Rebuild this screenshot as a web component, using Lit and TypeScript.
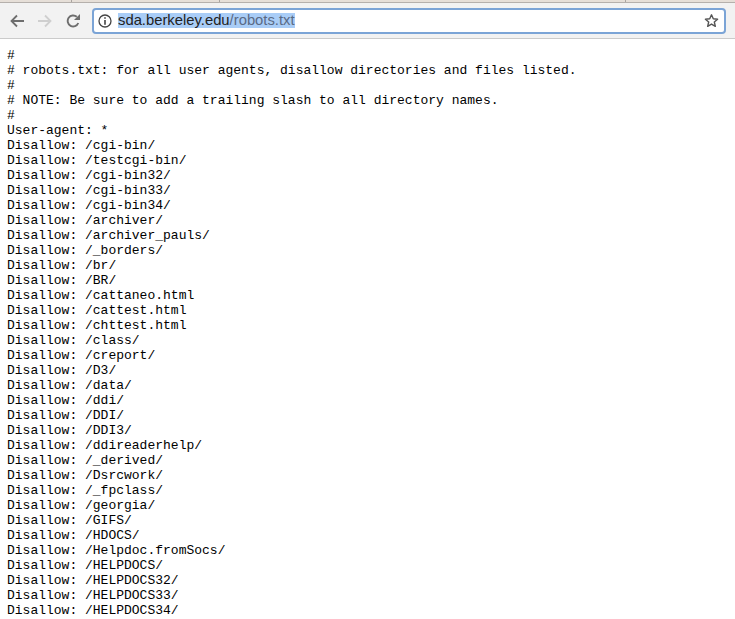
import { LitElement, html, css } from "lit";
import { customElement } from "lit/decorators.js";

const TEXT = `#
# robots.txt: for all user agents, disallow directories and files listed.
#
# NOTE: Be sure to add a trailing slash to all directory names.
#
User-agent: *
Disallow: /cgi-bin/
Disallow: /testcgi-bin/
Disallow: /cgi-bin32/
Disallow: /cgi-bin33/
Disallow: /cgi-bin34/
Disallow: /archiver/
Disallow: /archiver_pauls/
Disallow: /_borders/
Disallow: /br/
Disallow: /BR/
Disallow: /cattaneo.html
Disallow: /cattest.html
Disallow: /chttest.html
Disallow: /class/
Disallow: /creport/
Disallow: /D3/
Disallow: /data/
Disallow: /ddi/
Disallow: /DDI/
Disallow: /DDI3/
Disallow: /ddireaderhelp/
Disallow: /_derived/
Disallow: /Dsrcwork/
Disallow: /_fpclass/
Disallow: /georgia/
Disallow: /GIFS/
Disallow: /HDOCS/
Disallow: /Helpdoc.fromSocs/
Disallow: /HELPDOCS/
Disallow: /HELPDOCS32/
Disallow: /HELPDOCS33/
Disallow: /HELPDOCS34/`;

@customElement("app-root")
export class AppRoot extends LitElement {
  static styles = css`
    :host { display: block; height: 619px; overflow: hidden; background: #fff; }
    .tabs {
      height: 3px; box-sizing: border-box; background: #e6dfd8;
      border-bottom: 1px solid #b5b0ac; display: flex;
    }
    .tabs span { display: block; box-sizing: border-box; border-right: 1px solid #a9a4a0; height: 2px; flex: none; }
    .t1 { width: 72px; }
    .t2 { width: 148px; }
    .t3 { width: 406px; }
    .bar {
      height: 36px; box-sizing: border-box; background: #f2f2f2;
      border-bottom: 1px solid #cbcbcb;
      display: flex; align-items: center; padding: 0 9px 0 10px;
    }
    .nav { display: flex; align-items: center; width: 82px; gap: 14px; flex: none; }
    .nav svg { display: block; flex: none; }
    .omni {
      flex: 1; height: 26px; box-sizing: border-box;
      border: 2px solid #7ba4d6; border-radius: 4px; background: #fff;
      display: flex; align-items: center; padding: 0 5px 0 4px;
      font: 14.8px/15px "Liberation Sans", Arial, sans-serif; color: #222;
    }
    .info { flex: none; margin-right: 6px; display: block; }
    .sel { background: #a9cdf7; white-space: nowrap; }
    .path { color: #5a6a85; }
    .star { margin-left: auto; flex: none; display: block; }
    pre {
      margin: 0; padding: 9px 0 0 7px;
      font: 13px/15px "Liberation Mono", "Courier New", monospace; color: #000;
    }
  `;

  render() {
    return html`
      <div class="tabs"><span class="t1"></span><span class="t2"></span><span class="t3"></span></div>
      <div class="bar">
        <div class="nav">
          <svg width="14" height="14" viewBox="0 0 14 14"><path d="M14 7H1.5M7 1.5 1.5 7 7 12.5" fill="none" stroke="#6e6e6e" stroke-width="1.8"/></svg>
          <svg width="14" height="14" viewBox="0 0 14 14"><path d="M0 7h12.5M7 1.5 12.5 7 7 12.5" fill="none" stroke="#cfcfcf" stroke-width="1.8"/></svg>
          <svg width="14" height="14" viewBox="0 0 14 14"><path d="M12.3 9A5.5 5.5 0 1 1 10.8 2.8" fill="none" stroke="#6e6e6e" stroke-width="1.9"/><path d="M14 0v6H8z" fill="#6e6e6e"/></svg>
        </div>
        <div class="omni">
          <svg class="info" width="14" height="14" viewBox="0 0 14 14"><circle cx="7" cy="7" r="6" fill="none" stroke="#444" stroke-width="1.3"/><path d="M6.2 3.2h1.6v1.6H6.2zM6.2 6h1.6v4.8H6.2z" fill="#444"/></svg>
          <span class="sel">sda.berkeley.edu<span class="path">/robots.txt</span></span>
          <svg class="star" width="15" height="15" viewBox="0 0 16 15"><path d="M8 1.4l1.9 4.3 4.6.4-3.5 3 1.1 4.6L8 11.3l-4.1 2.4L5 9.1l-3.5-3 4.6-.4z" fill="none" stroke="#555" stroke-width="1.5" stroke-linejoin="round"/></svg>
        </div>
      </div>
      <pre>${TEXT}</pre>
    `;
  }
}
